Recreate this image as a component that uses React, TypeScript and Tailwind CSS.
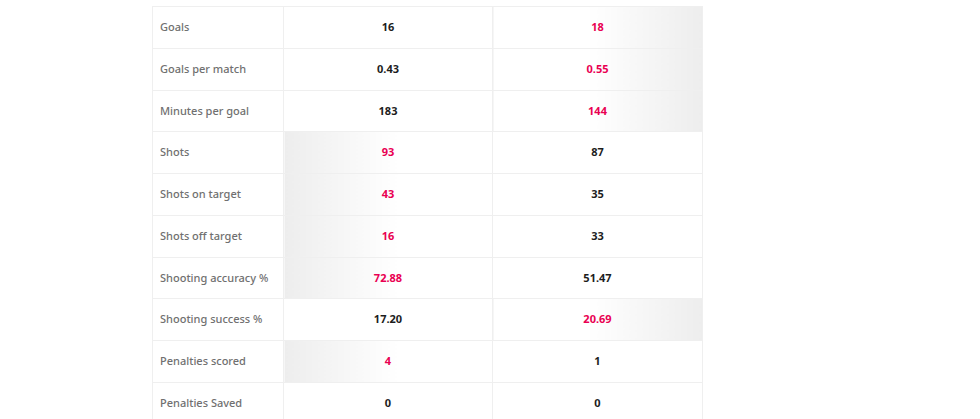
import React from 'react'

type Row = { label: string; a: string; b: string; win: 'a' | 'b' | null }

const rows: Row[] = [
  { label: 'Goals', a: '16', b: '18', win: 'b' },
  { label: 'Goals per match', a: '0.43', b: '0.55', win: 'b' },
  { label: 'Minutes per goal', a: '183', b: '144', win: 'b' },
  { label: 'Shots', a: '93', b: '87', win: 'a' },
  { label: 'Shots on target', a: '43', b: '35', win: 'a' },
  { label: 'Shots off target', a: '16', b: '33', win: 'a' },
  { label: 'Shooting accuracy %', a: '72.88', b: '51.47', win: 'a' },
  { label: 'Shooting success %', a: '17.20', b: '20.69', win: 'b' },
  { label: 'Penalties scored', a: '4', b: '1', win: 'a' },
  { label: 'Penalties Saved', a: '0', b: '0', win: null },
]

const ValueCell = ({ value, winner, side }: { value: string; winner: boolean; side: 'a' | 'b' }) => {
  const bg = !winner
    ? 'bg-white'
    : side === 'a'
      ? 'bg-[linear-gradient(to_left,#ffffff_45%,#ededed)]'
      : 'bg-[linear-gradient(to_right,#ffffff_45%,#ededed)]'
  return (
    <td
      className={`border border-[#efefef] text-center text-[11px] font-bold ${bg} ${
        winner ? 'text-[#e90052]' : 'text-[#1d1d1d]'
      }`}
    >
      {value}
    </td>
  )
}

export default function App() {
  return (
    <div className="w-[980px] h-[419px] overflow-hidden bg-white font-['Noto_Sans',sans-serif]">
      <div className="pt-[6px] pl-[152px]">
        <table className="w-[550px] border-collapse table-fixed border border-[#efefef]">
          <colgroup>
            <col className="w-[131px]" />
            <col className="w-[209px]" />
            <col className="w-[210px]" />
          </colgroup>
          <tbody>
            {rows.map((r) => (
              <tr key={r.label} className="h-[41.75px]">
                <td className="border border-[#efefef] pl-[7px] text-[11px] font-medium text-[#707070]">
                  {r.label}
                </td>
                <ValueCell value={r.a} winner={r.win === 'a'} side="a" />
                <ValueCell value={r.b} winner={r.win === 'b'} side="b" />
              </tr>
            ))}
          </tbody>
        </table>
      </div>
    </div>
  )
}
